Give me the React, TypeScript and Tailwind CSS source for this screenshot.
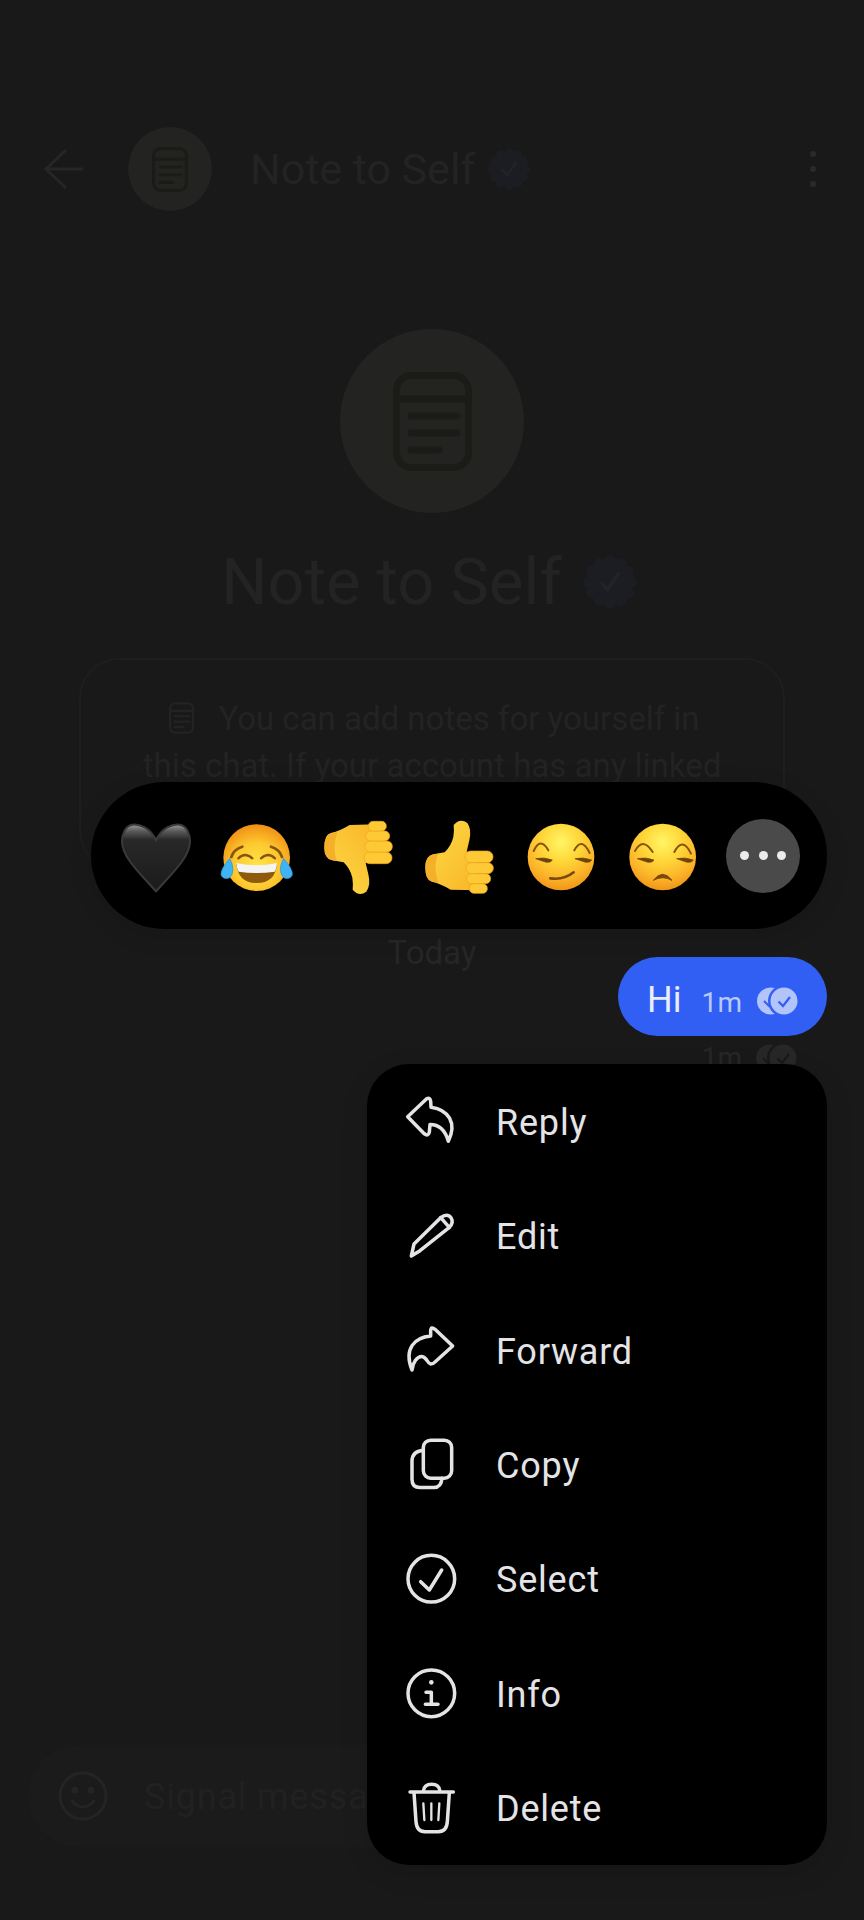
import React from "react";

function NoteIcon({ className }: { className: string }) {
  return (
    <svg viewBox="0 0 79 99" className={className} fill="none" stroke="currentColor" strokeWidth="7" strokeLinecap="round">
      <rect x="3.5" y="3.5" width="72" height="92" rx="15" />
      <path d="M3.5 27H75.5" strokeLinecap="butt" />
      <path d="M18 44H64M18 61H64M18 78H46" />
    </svg>
  );
}

function Badge({ className }: { className: string }) {
  const bumps = Array.from({ length: 12 }, (_, i) => (i * Math.PI) / 6);
  return (
    <svg viewBox="0 0 48 48" className={className}>
      <circle cx="24" cy="24" r="19" fill="#1c1d23" />
      {bumps.map((a) => (
        <circle key={a} cx={24 + 17.5 * Math.cos(a)} cy={24 + 17.5 * Math.sin(a)} r="5.5" fill="#1c1d23" />
      ))}
      <path d="M16.5 24.5L22 30.5L32 16" fill="none" stroke="#232326" strokeWidth="3" />
    </svg>
  );
}

function DoubleCheck({ color, bg, check }: { color: string; bg: string; check: string }) {
  return (
    <svg viewBox="0 0 44 30" className="w-[44px] h-[30px]">
      <circle cx="15.5" cy="15" r="13.5" fill={color} />
      <path d="M9 15L14 20L17 16" fill="none" stroke={check} strokeWidth="2" />
      <circle cx="29" cy="15" r="16" fill={bg} />
      <circle cx="29" cy="15" r="13.5" fill={color} />
      <path d="M23.5 15.5L28 20L35 11" fill="none" stroke={check} strokeWidth="2.2" />
    </svg>
  );
}

function FaceDefs({ id }: { id: string }) {
  return (
    <defs>
      <radialGradient id={id} cx="50%" cy="28%" r="78%">
        <stop offset="0%" stopColor="#fff566" />
        <stop offset="35%" stopColor="#ffd93b" />
        <stop offset="70%" stopColor="#fbb428" />
        <stop offset="100%" stopColor="#ee8a14" />
      </radialGradient>
    </defs>
  );
}

function Eye({ d }: { d: string }) {
  return <path d={d} fill="#6e430a" stroke="#6e430a" strokeWidth="2" strokeLinejoin="round" />;
}

function HeartEmoji() {
  return (
    <svg viewBox="0 0 300 270" className="w-[100px] h-[90px]">
      <defs>
        <linearGradient id="heartFill" x1="0" y1="0" x2="0" y2="1">
          <stop offset="0%" stopColor="#9a9a9a" />
          <stop offset="10%" stopColor="#5a5a5a" />
          <stop offset="23%" stopColor="#282828" />
          <stop offset="100%" stopColor="#1b1b1b" />
        </linearGradient>
      </defs>
      <path
        d="M150 88C132 48 98 38 78 41C58 45 48 68 48 92C48 140 110 195 150 241C190 195 252 140 252 92C252 68 242 45 222 41C202 38 168 48 150 88Z"
        fill="url(#heartFill)"
        stroke="#3a3a3a"
        strokeWidth="6"
      />
    </svg>
  );
}

function LaughEmoji() {
  return (
    <svg viewBox="0 0 300 270" className="w-[100px] h-[90px]">
      <defs>
        <radialGradient id="laughFace" cx="50%" cy="62%" r="62%">
          <stop offset="0%" stopColor="#ffe64a" />
          <stop offset="55%" stopColor="#fdc92f" />
          <stop offset="100%" stopColor="#f08f14" />
        </radialGradient>
      </defs>
      <circle cx="149" cy="140" r="100" fill="url(#laughFace)" />
      <path d="M73 138Q80 115 106 107M225 138Q218 115 192 107" fill="none" stroke="#8a5410" strokeWidth="8" strokeLinecap="round" />
      <path d="M94 142Q114 122 136 142M162 142Q184 122 204 142" fill="none" stroke="#8a5410" strokeWidth="7" strokeLinecap="round" />
      <path d="M88 158Q149 172 210 158Q205 216 149 216Q93 216 88 158Z" fill="#8f5a0c" />
      <path d="M88 156Q149 170 210 156Q208 176 203 182Q149 190 95 182Q90 176 88 156Z" fill="#f4f4f4" />
      <path d="M68 142Q88 180 68 200Q50 208 42 192Q40 175 68 142Z" fill="#3fb4f2" stroke="#2a93dc" strokeWidth="2" />
      <path d="M230 142Q210 180 230 200Q248 208 256 192Q258 175 230 142Z" fill="#3fb4f2" stroke="#2a93dc" strokeWidth="2" />
    </svg>
  );
}

function ThumbShape({ id }: { id: string }) {
  return (
    <>
      <defs>
        <linearGradient id={id} x1="0" y1="0" x2="1" y2="1">
          <stop offset="0%" stopColor="#ffdc48" />
          <stop offset="100%" stopColor="#f8b527" />
        </linearGradient>
      </defs>
      <path
        d="M46 168Q46 135 70 130L104 124Q124 104 130 78Q133 58 131 42Q150 20 172 36Q186 55 178 88L170 122L200 122L205 238L122 236Q88 216 66 212Q46 208 46 168Z"
        fill={`url(#${id})`}
      />
      <path d="M46 168Q46 135 70 130L84 128Q68 170 86 216Q76 213 66 212Q46 208 46 168Z" fill="#f5b02a" />
      <rect x="165" y="120" width="84" height="35" rx="17" fill="#fdc934" stroke="#f0a51d" strokeWidth="2" />
      <rect x="168" y="155" width="82" height="33" rx="16" fill="#fdc934" stroke="#f0a51d" strokeWidth="2" />
      <rect x="170" y="188" width="72" height="30" rx="15" fill="#fdc934" stroke="#f0a51d" strokeWidth="2" />
      <rect x="178" y="218" width="54" height="29" rx="14" fill="#fdc934" stroke="#f0a51d" strokeWidth="2" />
    </>
  );
}

function ThumbUpEmoji() {
  return (
    <svg viewBox="0 0 300 270" className="w-[100px] h-[90px]">
      <ThumbShape id="thumbUp" />
    </svg>
  );
}

function ThumbDownEmoji() {
  return (
    <svg viewBox="0 0 300 270" className="w-[100px] h-[90px]">
      <g transform="translate(3 278) scale(1 -1)">
        <ThumbShape id="thumbDown" />
      </g>
    </svg>
  );
}

function SmirkEmoji() {
  return (
    <svg viewBox="0 0 300 270" className="w-[100px] h-[90px]">
      <FaceDefs id="smirkFace" />
      <circle cx="150" cy="138" r="100" fill="url(#smirkFace)" />
      <path d="M68 120Q88 76 112 118M190 118Q212 76 236 126" fill="none" stroke="#8a5410" strokeWidth="6" strokeLinecap="round" />
      <Eye d="M74 143Q98 137 124 147Q120 155 106 154Q94 150 74 143Z" />
      <Eye d="M192 143Q216 137 242 147Q238 155 224 154Q212 150 192 143Z" />
      <path d="M118 202Q158 208 188 184" fill="none" stroke="#7a4a0c" strokeWidth="8" strokeLinecap="round" />
    </svg>
  );
}

function UnamusedEmoji() {
  return (
    <svg viewBox="0 0 300 270" className="w-[100px] h-[90px]">
      <FaceDefs id="unamusedFace" />
      <circle cx="152" cy="138" r="100" fill="url(#unamusedFace)" />
      <path d="M69 120Q92 76 122 123M187 123Q212 76 237 128" fill="none" stroke="#8a5410" strokeWidth="6" strokeLinecap="round" />
      <Eye d="M76 143Q100 137 126 147Q122 155 108 154Q96 150 76 143Z" />
      <Eye d="M194 143Q218 137 244 147Q240 155 226 154Q214 150 194 143Z" />
      <path d="M124 208Q152 172 180 208Q152 192 124 208Z" fill="#7a4a0c" stroke="#7a4a0c" strokeWidth="3" strokeLinejoin="round" />
    </svg>
  );
}

function MenuIcon({ box, children }: { box: string; children: React.ReactNode }) {
  return (
    <svg viewBox={box} className="w-[54px] h-[54px] shrink-0" fill="none" stroke="#e4e4e7" strokeWidth="10.5" strokeLinecap="round" strokeLinejoin="round">
      {children}
    </svg>
  );
}

const menuItems: { label: string; icon: React.ReactNode }[] = [
  {
    label: "Reply",
    icon: (
      <MenuIcon box="99 103.5 162 162">
        <path d="M113 172L170 118Q180 112 182 125L183 143C235 150 262 190 235 245C225 210 205 195 180 195L178 218Q175 232 162 222Z" />
      </MenuIcon>
    ),
  },
  {
    label: "Edit",
    icon: (
      <MenuIcon box="99 447 162 162">
        <path d="M212 473Q232 458 243 473Q252 488 238 502L150 572L124 588L132 552Z" />
        <path d="M212 473L238 502" />
      </MenuIcon>
    ),
  },
  {
    label: "Forward",
    icon: (
      <MenuIcon box="99 -51 162 162">
        <path d="M248 18L195 -32Q183 -42 182 -28L182 -12C135 -8 100 25 126 90C128 70 140 48 158 50C170 52 172 70 182 72Q190 72 195 66Z" />
      </MenuIcon>
    ),
  },
  {
    label: "Copy",
    icon: (
      <MenuIcon box="99 292.5 162 162">
        <rect x="160" y="302" width="85" height="114" rx="22" />
        <path d="M160 332Q126 335 126 365L126 420Q126 444 150 444L192 444Q214 444 216 416" />
      </MenuIcon>
    ),
  },
  {
    label: "Select",
    icon: (
      <MenuIcon box="99 636 162 162">
        <circle cx="184" cy="716" r="70" />
        <path d="M152 725L178 750L215 690" />
      </MenuIcon>
    ),
  },
  {
    label: "Info",
    icon: (
      <MenuIcon box="39 48 162 162">
        <circle cx="124" cy="130" r="70" />
        <path d="M108 127H124V163M106 163H144" />
        <circle cx="124" cy="97" r="4" strokeWidth="6" fill="#e4e4e7" />
      </MenuIcon>
    ),
  },
  {
    label: "Delete",
    icon: (
      <MenuIcon box="39 393 162 162">
        <path d="M60 426H190" />
        <path d="M100 424Q102 403 125 403Q148 403 150 424" />
        <path d="M72 428L78 515Q80 545 105 545H145Q170 545 172 515L178 428" />
        <path d="M100 460L103 510M124 460V510M148 460L145 510" strokeWidth="7" />
      </MenuIcon>
    ),
  },
];

export default function App() {
  return (
    <div className="relative w-[864px] h-[1920px] overflow-hidden bg-[#191919] flex flex-col font-['Roboto',sans-serif]">
      {/* dimmed conversation */}
      <header className="mt-[127px] h-[84px] flex items-center pl-[44px] shrink-0">
        <svg viewBox="0 0 40 40" className="w-[40px] h-[40px] shrink-0" fill="none" stroke="#262626" strokeWidth="3">
          <path d="M39 20H2M22 1L2 20L22 39" />
        </svg>
        <div className="ml-[44px] w-[84px] h-[84px] rounded-full bg-[#232321] flex items-center justify-center text-[#1b1b17]">
          <NoteIcon className="w-[36px] h-[45px]" />
        </div>
        <div className="ml-[38px] text-[43px] leading-[48px] text-[#232323]">Note to Self</div>
        <Badge className="ml-[12px] w-[44px] h-[44px]" />
        <div className="ml-auto mr-[48px] flex flex-col gap-[9px]">
          <div className="w-[6px] h-[6px] rounded-full bg-[#2a2a2a]" />
          <div className="w-[6px] h-[6px] rounded-full bg-[#2a2a2a]" />
          <div className="w-[6px] h-[6px] rounded-full bg-[#2a2a2a]" />
        </div>
      </header>

      <div className="mt-[118px] self-center w-[184px] h-[184px] rounded-full bg-[#232321] flex items-center justify-center text-[#1b1b17] shrink-0">
        <NoteIcon className="w-[79px] h-[99px]" />
      </div>
      <div className="mt-[33px] pr-[5px] flex items-center justify-center text-[65px] leading-[72px] text-[#232323] shrink-0">
        Note to Self
        <Badge className="ml-[20px] w-[56px] h-[56px]" />
      </div>

      <div className="mt-[40px] mx-[79px] rounded-[40px] border-2 border-[#1e1e1e] pt-[35px] pb-[33px] text-center text-[33px] leading-[47px] text-[#232323] shrink-0">
        <NoteIcon className="inline-block w-[25px] h-[32px] ml-[5px] mr-[24px] -mt-[6px] align-middle" />
        You can add notes for yourself in
        <br />
        this chat. If your account has any linked
        <br />
        devices, new notes will be synced.
      </div>

      <div className="mt-[64px] text-center text-[33px] leading-[36px] text-[#262626] shrink-0">Today</div>

      <div className="mt-[72px] flex items-center justify-end pr-[66px] text-[#272727] text-[28px] leading-[30px] shrink-0">
        <span className="mr-[12px]">1m</span>
        <DoubleCheck color="#272727" bg="#191919" check="#191919" />
      </div>

      <div className="mt-auto mb-[73px] ml-[28px] w-[720px] h-[102px] rounded-[51px] bg-[#1b1b1b] flex items-center pl-[30px] shrink-0">
        <svg viewBox="0 0 50 50" className="w-[50px] h-[50px] shrink-0" fill="none" stroke="#242424" strokeWidth="3" strokeLinecap="round">
          <circle cx="25" cy="25" r="23" />
          <path d="M14 30Q25 42 36 30" />
          <circle cx="17" cy="19" r="2" fill="#242424" />
          <circle cx="33" cy="19" r="2" fill="#242424" />
        </svg>
        <span className="ml-[36px] pt-[2px] text-[36px] tracking-[0.8px] text-[#212121]">Signal message</span>
      </div>

      {/* focused message with reactions and actions */}
      <div className="absolute inset-0 pt-[782px] pr-[37px] flex flex-col items-end">
        <div className="w-[736px] h-[147px] rounded-[74px] bg-black flex items-center pl-[14.5px] shadow-[0_6px_24px_rgba(0,0,0,0.12)]">
          <div className="w-[101.2px] flex justify-center"><HeartEmoji /></div>
          <div className="w-[101.2px] flex justify-center"><LaughEmoji /></div>
          <div className="w-[101.2px] flex justify-center"><ThumbDownEmoji /></div>
          <div className="w-[101.2px] flex justify-center"><ThumbUpEmoji /></div>
          <div className="w-[101.2px] flex justify-center"><SmirkEmoji /></div>
          <div className="w-[101.2px] flex justify-center"><UnamusedEmoji /></div>
          <div className="w-[101.2px] flex justify-center">
            <div className="w-[74px] h-[74px] rounded-full bg-[#4a4a4a] flex items-center justify-center gap-[9.5px]">
              <div className="w-[9px] h-[9px] rounded-full bg-[#ececec]" />
              <div className="w-[9px] h-[9px] rounded-full bg-[#ececec]" />
              <div className="w-[9px] h-[9px] rounded-full bg-[#ececec]" />
            </div>
          </div>
        </div>

        <div className="mt-[28px] w-[209px] h-[79px] rounded-[40px] bg-[#315ff4] flex items-baseline pl-[29px] pt-[23px]">
          <span className="text-[36px] leading-[40px] text-[#e9edfe]">Hi</span>
          <span className="ml-[20px] text-[28px] leading-[30px] tracking-[0.3px] text-[#b9c9fb]">1m</span>
          <span className="ml-[13px] self-start mt-[6px] flex"><DoubleCheck color="#b3c4fb" bg="#315ff4" check="#315ff4" /></span>
        </div>

        <div className="mt-[28px] w-[460px] h-[801px] rounded-[42px] bg-black grid grid-rows-7 pl-[36px] shadow-[0_8px_28px_rgba(0,0,0,0.12)]">
          {menuItems.map((item) => (
            <div key={item.label} className="flex items-center gap-[39px]">
              {item.icon}
              <span className="pt-[3px] text-[36px] tracking-[0.8px] text-[#e4e4e7]">{item.label}</span>
            </div>
          ))}
        </div>
      </div>
    </div>
  );
}
